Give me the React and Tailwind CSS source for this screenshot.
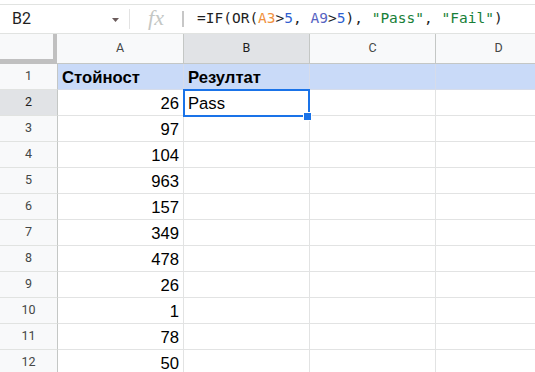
import React from "react";

const rows = [
  ["Стойност", "Резултат"],
  ["26", "Pass"],
  ["97", ""],
  ["104", ""],
  ["963", ""],
  ["157", ""],
  ["349", ""],
  ["478", ""],
  ["26", ""],
  ["1", ""],
  ["78", ""],
  ["50", ""],
];

function HeaderCell({ label, selected, w }) {
  return (
    <div
      className={`${w} h-[30px] shrink-0 flex items-center justify-center border-r border-b border-[#c4c7c5] text-[12.5px] ${
        selected ? "bg-[#e1e3e6] text-[#1f1f1f]" : "bg-[#f8f9fa] text-[#444746]"
      }`}
      style={{ fontFamily: "Roboto, 'Liberation Sans', sans-serif" }}
    >
      {label}
    </div>
  );
}

export default function App() {
  return (
    <div
      className="w-[535px] h-[372px] overflow-hidden bg-white"
      style={{ fontFamily: "'Liberation Sans', Arial, sans-serif" }}
    >
      <div className="h-[4px]" />
      {/* formula bar */}
      <div className="h-[30px] flex items-center border-t border-b border-[#e1e3e1]">
        <div className="w-[129px] shrink-0 flex items-center justify-between pl-[12px] pr-[10px]">
          <span
            className="text-[16px] text-[#1f1f1f]"
            style={{ fontFamily: "Roboto, 'Liberation Sans', sans-serif" }}
          >
            B2
          </span>
          <svg width="7" height="4" viewBox="0 0 7 4" className="mt-[1px]">
            <path d="M0 0 L7 0 L3.5 4 Z" fill="#6b5b5b" />
          </svg>
        </div>
        <div className="w-[1px] h-[20px] bg-[#e3e3e3] shrink-0" />
        <div className="w-[52px] shrink-0 flex items-center justify-center">
          <span
            className="italic text-[22px] leading-none text-[#c4c7c5] -mt-[2px]"
            style={{ fontFamily: "'Liberation Serif', 'Times New Roman', serif" }}
          >
            fx
          </span>
        </div>
        <div className="w-[2px] h-[16px] bg-[#c7c7c7] shrink-0" />
        <div
          className="pl-[13px] text-[14.5px] whitespace-pre text-[#1f1f1f]"
          style={{ fontFamily: "'DejaVu Sans Mono', 'Liberation Mono', monospace" }}
        >
          <span>=IF(OR(</span>
          <span className="text-[#f0913e]">A3</span>
          <span>&gt;</span>
          <span className="text-[#2f5fd0]">5</span>
          <span>, </span>
          <span className="text-[#5764c2]">A9</span>
          <span>&gt;</span>
          <span className="text-[#2f5fd0]">5</span>
          <span>), </span>
          <span className="text-[#188038]">"Pass"</span>
          <span>, </span>
          <span className="text-[#188038]">"Fail"</span>
          <span>)</span>
        </div>
      </div>
      {/* column headers */}
      <div className="flex">
        <div className="w-[57px] h-[30px] shrink-0 bg-[#f8f9fa] border-r-[4px] border-b-[5px] border-[#c0c0c0]" />
        <HeaderCell label="A" w="w-[127px]" />
        <HeaderCell label="B" w="w-[126px]" selected />
        <HeaderCell label="C" w="w-[126px]" />
        <HeaderCell label="D" w="w-[126px]" />
      </div>
      {/* rows */}
      {rows.map((r, i) => {
        const first = i === 0;
        const sel = i === 1;
        const cellBg = first ? "bg-[#c9daf8]" : "bg-white";
        const cellBorder = first ? "border-[#d6dcea]" : "border-[#e2e3e3]";
        return (
          <div key={i} className="flex h-[26px]">
            <div
              className={`w-[58px] shrink-0 flex items-center justify-center border-r border-r-[#c4c7c5] border-b border-b-[#e1e3e1] text-[12.5px] ${
                sel ? "bg-[#e1e3e6] text-[#1f1f1f]" : "bg-[#f8f9fa] text-[#444746]"
              }`}
              style={{ fontFamily: "Roboto, 'Liberation Sans', sans-serif" }}
            >
              {i + 1}
            </div>
            <div
              className={`w-[126px] shrink-0 flex items-center border-r border-b ${cellBorder} ${cellBg} text-[16.67px] text-black ${
                first ? "justify-start pl-[4px] font-bold" : "justify-end pr-[4px]"
              }`}
            >
              <span className="pt-[1px]">{r[0]}</span>
            </div>
            <div
              className={`relative w-[126px] shrink-0 flex items-center border-r border-b ${cellBorder} ${cellBg} text-[16.67px] text-black pl-[4px] ${
                first ? "font-bold" : ""
              } ${sel ? "z-10" : ""}`}
            >
              <span className="pt-[1px]">{r[1]}</span>
              {sel && (
                <>
                  <div className="absolute z-10 top-[-1px] left-[-1px] right-[-1px] bottom-[-2px] border-2 border-[#1a73e8] pointer-events-none" />
                  <div className="absolute z-20 right-[-3px] bottom-[-6px] w-[9px] h-[9px] bg-[#1a73e8] border border-white" />
                </>
              )}
            </div>
            <div className={`w-[126px] shrink-0 border-r border-b ${cellBorder} ${cellBg}`} />
            <div className={`w-[126px] shrink-0 border-r border-b ${cellBorder} ${cellBg}`} />
          </div>
        );
      })}
    </div>
  );
}
